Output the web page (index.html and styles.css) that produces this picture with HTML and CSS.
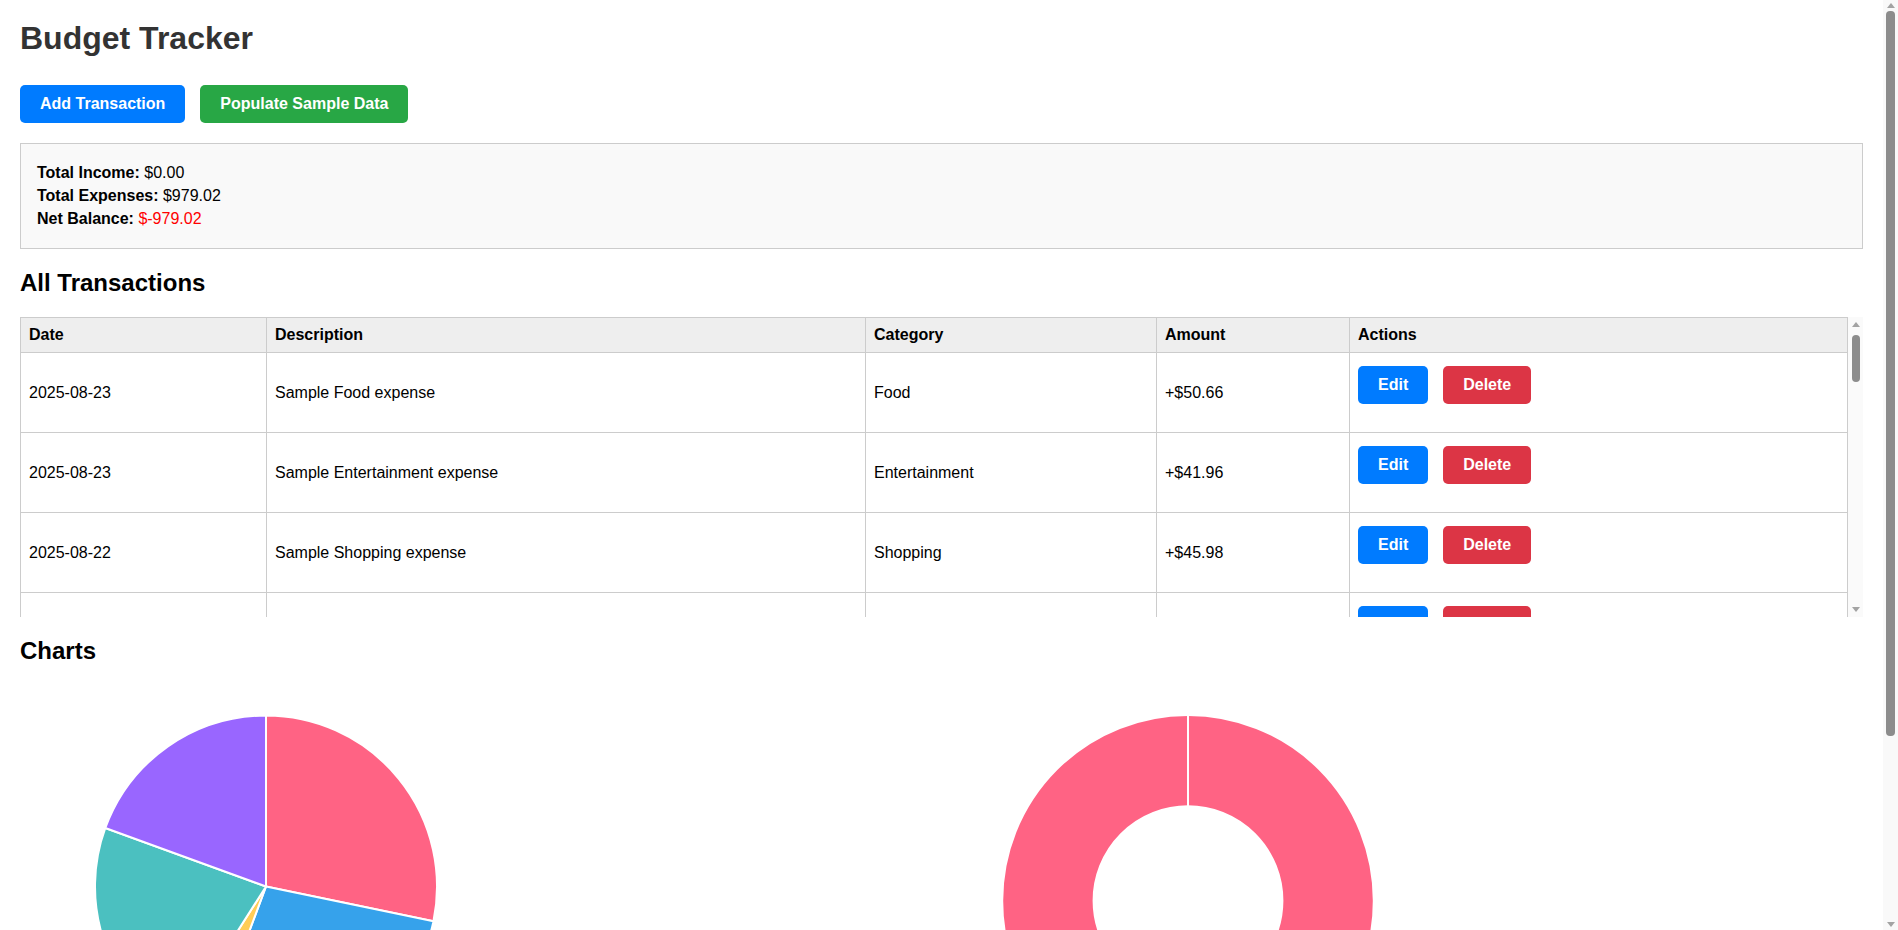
FILE: index.html
```html
<!DOCTYPE html>
<html lang="en">
<head>
<meta charset="utf-8">
<title>Budget Tracker</title>
<link rel="stylesheet" href="styles.css">
</head>
<body>
<div class="page">
  <h1 class="title">Budget Tracker</h1>
  <div class="toolbar">
    <button class="btn btn-blue">Add Transaction</button>
    <button class="btn btn-green">Populate Sample Data</button>
  </div>

  <div class="summary">
    <p><strong>Total Income:</strong> $0.00</p>
    <p><strong>Total Expenses:</strong> $979.02</p>
    <p><strong>Net Balance:</strong> <span class="negative">$-979.02</span></p>
  </div>

  <h2 class="section-title">All Transactions</h2>
  <div class="table-frame">
    <div class="table-wrap">
      <table class="tx-table">
        <colgroup>
          <col class="col-date">
          <col class="col-desc">
          <col class="col-cat">
          <col class="col-amt">
          <col class="col-act">
        </colgroup>
        <thead>
          <tr><th>Date</th><th>Description</th><th>Category</th><th>Amount</th><th>Actions</th></tr>
        </thead>
        <tbody>
          <tr><td>2025-08-23</td><td>Sample Food expense</td><td>Food</td><td>+$50.66</td><td><div class="actions"><button class="btn btn-blue">Edit</button><button class="btn btn-red">Delete</button></div></td></tr>
          <tr><td>2025-08-23</td><td>Sample Entertainment expense</td><td>Entertainment</td><td>+$41.96</td><td><div class="actions"><button class="btn btn-blue">Edit</button><button class="btn btn-red">Delete</button></div></td></tr>
          <tr><td>2025-08-22</td><td>Sample Shopping expense</td><td>Shopping</td><td>+$45.98</td><td><div class="actions"><button class="btn btn-blue">Edit</button><button class="btn btn-red">Delete</button></div></td></tr>
          <tr><td>2025-08-21</td><td>Sample Transport expense</td><td>Transport</td><td>+$38.12</td><td><div class="actions"><button class="btn btn-blue">Edit</button><button class="btn btn-red">Delete</button></div></td></tr>
          <tr><td>2025-08-20</td><td>Sample Food expense</td><td>Food</td><td>+$47.30</td><td><div class="actions"><button class="btn btn-blue">Edit</button><button class="btn btn-red">Delete</button></div></td></tr>
          <tr><td>2025-08-19</td><td>Sample Utilities expense</td><td>Utilities</td><td>+$49.85</td><td><div class="actions"><button class="btn btn-blue">Edit</button><button class="btn btn-red">Delete</button></div></td></tr>
        </tbody>
      </table>
    </div>
    <div class="vscroll vscroll-table">
      <div class="sb-btn"><span class="sb-up"></span></div>
      <div class="sb-track"><div class="sb-thumb sb-thumb-table"></div></div>
      <div class="sb-btn"><span class="sb-down"></span></div>
    </div>
  </div>

  <h2 class="section-title">Charts</h2>
  <div class="charts">
    <div class="chart-box">
      <svg class="chart-svg" width="492" height="446" viewBox="0 0 492 446" aria-label="Expenses by category">
        <g stroke="#ffffff" stroke-width="2" stroke-linejoin="round">
          <path fill="#ff6384" d="M246,201.5 L246,30.5 A171,171 0 0 1 413.45,236.18 Z"/>
          <path fill="#36a2eb" d="M246,201.5 L413.45,236.18 A171,171 0 0 1 186.11,361.67 Z"/>
          <path fill="#ffcd56" d="M246,201.5 L186.11,361.67 A171,171 0 0 1 154.12,345.72 Z"/>
          <path fill="#4bc0c0" d="M246,201.5 L154.12,345.72 A171,171 0 0 1 85.31,143.01 Z"/>
          <path fill="#9966ff" d="M246,201.5 L85.31,143.01 A171,171 0 0 1 246,30.5 Z"/>
        </g>
      </svg>
    </div>
    <div class="chart-box">
      <svg class="chart-svg" width="492" height="446" viewBox="0 0 492 446" aria-label="Income vs expenses">
        <circle cx="246" cy="215.7" r="140.1" fill="none" stroke="#ff6384" stroke-width="89.4"/>
        <line x1="246" y1="30" x2="246" y2="121" stroke="#ffffff" stroke-width="2"/>
      </svg>
    </div>
  </div>
</div>
<div class="vscroll vscroll-page">
  <div class="sb-btn sb-btn-page"><span class="sb-up"></span></div>
  <div class="sb-track"><div class="sb-thumb sb-thumb-page"></div></div>
  <div class="sb-btn sb-btn-page"><span class="sb-down"></span></div>
</div>
</body>
</html>
```

FILE: styles.css
```css
html, body {
  margin: 0;
  padding: 0;
  height: 100%;
  background: #ffffff;
}

body {
  display: flex;
  overflow: hidden;
  font-family: "Liberation Sans", Arial, sans-serif;
  font-size: 16px;
  color: #000000;
}

.page {
  flex: 1;
  min-width: 0;
  overflow: hidden;
  padding: 20px 20px 20px;
}

.title {
  margin: 0 0 28px;
  font-size: 32px;
  font-weight: bold;
  line-height: normal;
  color: #333333;
}

.toolbar {
  display: flex;
  gap: 15px;
  margin-bottom: 20px;
}

.btn {
  font-family: "Liberation Sans", Arial, sans-serif;
  font-size: 16px;
  font-weight: bold;
  line-height: normal;
  color: #ffffff;
  border: none;
  border-radius: 5px;
  padding: 10px 20px;
  cursor: pointer;
}

.btn-blue { background: #007bff; }
.btn-green { background: #28a745; }
.btn-red { background: #dc3545; }

.summary {
  border: 1px solid #cccccc;
  background: #f9f9f9;
  padding: 15px 16px 15px;
}

.summary p {
  margin: 5px 0;
  line-height: 18px;
}

.negative {
  color: #ff0000;
}

.section-title {
  font-size: 24px;
  font-weight: bold;
  margin: 20px 0;
  line-height: normal;
}

/* transactions table with its scrollbar */
.table-frame {
  display: flex;
  height: 300px;
}

.table-wrap {
  flex: 1;
  min-width: 0;
  overflow: hidden;
}

.tx-table {
  width: 100%;
  border-collapse: collapse;
  table-layout: fixed;
}

.col-date { width: 246px; }
.col-desc { width: 599px; }
.col-cat { width: 291px; }
.col-amt { width: 193px; }

.tx-table th,
.tx-table td {
  border: 1px solid #cccccc;
  padding: 8px;
  text-align: left;
  vertical-align: middle;
  line-height: normal;
}

.tx-table th {
  background: #eeeeee;
  font-weight: bold;
}

.actions {
  display: flex;
  gap: 15px;
  padding: 5px 0 20px;
}

/* scrollbars */
.vscroll {
  width: 15px;
  flex: none;
  display: flex;
  flex-direction: column;
  background: #fafafa;
}

.vscroll-page {
  height: 100%;
  background: #f9f9f9;
}

.sb-btn {
  height: 15px;
  display: flex;
  align-items: center;
  justify-content: center;
}

.sb-btn-page {
  height: 11px;
}

.sb-up {
  width: 0;
  height: 0;
  border-left: 4px solid transparent;
  border-right: 4px solid transparent;
  border-bottom: 5px solid #a3a3a3;
}

.sb-down {
  width: 0;
  height: 0;
  border-left: 4px solid transparent;
  border-right: 4px solid transparent;
  border-top: 5px solid #a3a3a3;
}

.sb-track {
  flex: 1;
  display: flex;
  flex-direction: column;
  align-items: center;
}

.sb-thumb {
  width: 8px;
  border-radius: 4px;
  background: #8c8c8c;
}

.sb-thumb-table {
  margin-top: 3px;
  height: 47px;
}

.sb-thumb-page {
  width: 9px;
  height: 725px;
}

/* charts */
.charts {
  display: grid;
  grid-template-columns: 1fr 1fr;
}

.chart-svg {
  display: block;
}
```
